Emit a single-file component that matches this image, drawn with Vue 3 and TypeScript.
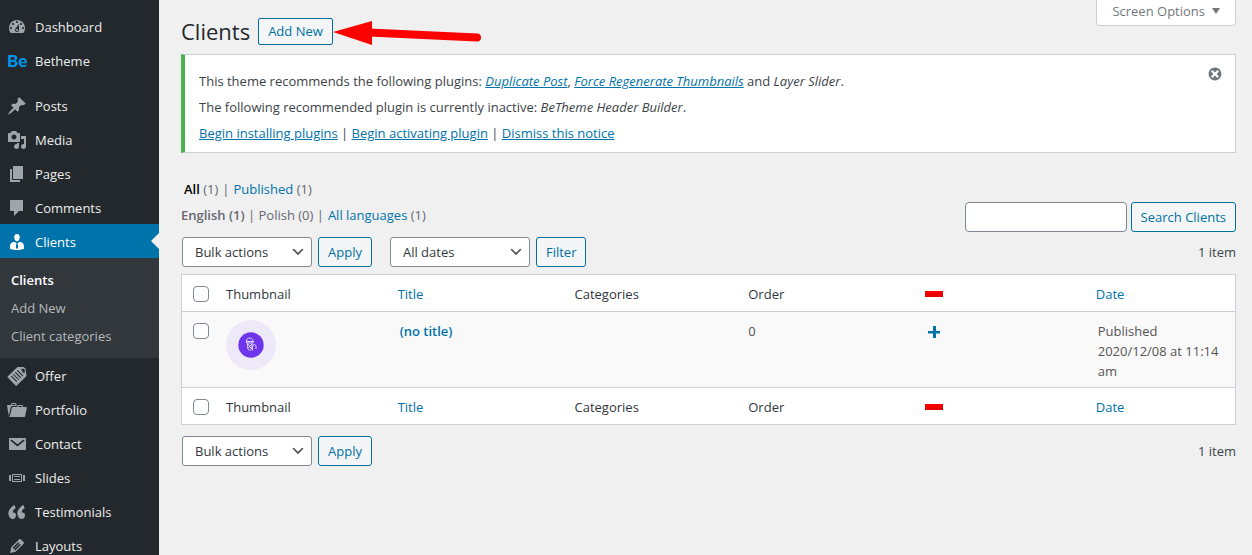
<script setup lang="ts">
interface MenuItem {
  label: string
  icon: string
  current?: boolean
}

const icons: Record<string, string> = {
  dashboard:
    'M3.76 16h12.48c1.1-1.37 1.76-3.11 1.76-5 0-4.42-3.58-8-8-8s-8 3.58-8 8c0 1.89.66 3.63 1.76 5zM10 4c.55 0 1 .45 1 1s-.45 1-1 1-1-.45-1-1 .45-1 1-1zM6 6c.55 0 1 .45 1 1s-.45 1-1 1-1-.45-1-1 .45-1 1-1zm8 0c.55 0 1 .45 1 1s-.45 1-1 1-1-.45-1-1 .45-1 1-1zm-5.37 5.55L12 7v6c0 1.1-.9 2-2 2s-2-.9-2-2c0-.57.24-1.08.63-1.45zM4 10c.55 0 1 .45 1 1s-.45 1-1 1-1-.45-1-1 .45-1 1-1zm12 0c.55 0 1 .45 1 1s-.45 1-1 1-1-.45-1-1 .45-1 1-1zm-5 3c0-.55-.45-1-1-1s-1 .45-1 1 .45 1 1 1 1-.45 1-1z',
  posts:
    'M10.44 3.02l1.82-1.82 6.36 6.35-1.83 1.82c-1.05-.68-2.48-.57-3.41.36l-.75.75c-.92.93-1.04 2.35-.35 3.41l-1.83 1.82-2.41-2.41-2.8 2.79c-.42.42-3.38 2.71-3.8 2.29s1.86-3.39 2.28-3.81l2.79-2.79L4.1 9.36l1.83-1.82c1.05.69 2.48.57 3.4-.36l.75-.75c.93-.92 1.05-2.35.36-3.41z',
  media:
    'M13 11V4c0-.55-.45-1-1-1h-1.67L9 1H5L3.67 3H2c-.55 0-1 .45-1 1v7c0 .55.45 1 1 1h10c.55 0 1-.45 1-1zM7 4.5c1.38 0 2.5 1.12 2.5 2.5S8.38 9.5 7 9.5 4.5 8.38 4.5 7 5.62 4.5 7 4.5zM14 6h5v10.5c0 1.38-1.12 2.5-2.5 2.5S14 17.88 14 16.5s1.12-2.5 2.5-2.5c.17 0 .34.02.5.05V9h-3V6zm-4 8.05V13h2v3.5c0 1.38-1.12 2.5-2.5 2.5S7 17.88 7 16.5 8.12 14 9.5 14c.17 0 .34.02.5.05z',
  pages: 'M6 15V2h10v13H6zm-1 1h8v2H3V5h2v11z',
  comments: 'M4 2h12v11h-4l-5 5v-5H4c-.6 0-1-.4-1-1V3c0-.6.4-1 1-1z',
  clients:
    'M7.3 6l-.03-.19c-.04-.37-.05-.73-.03-1.08.02-.36.1-.71.25-1.04.14-.32.31-.61.52-.86s.49-.46.83-.6c.34-.15.72-.23 1.13-.23.69 0 1.26.2 1.71.59s.76.87.91 1.44.18 1.16.09 1.78l-.03.19c-.01.09-.05.25-.11.48-.05.24-.12.47-.2.69-.08.21-.19.45-.34.72-.14.27-.3.49-.47.69-.18.19-.4.34-.67.48-.27.13-.55.19-.86.19s-.59-.06-.87-.19c-.26-.13-.49-.29-.67-.5-.18-.2-.34-.42-.49-.66-.15-.25-.26-.49-.34-.73-.09-.25-.16-.47-.21-.67-.06-.21-.1-.37-.12-.5zm9.2 6.24c.41.7.5 1.41.5 2.14v2.49c0 .03-.12.08-.29.13-.18.04-.42.13-.97.27-.55.12-1.1.24-1.65.34s-1.19.19-1.95.27c-.75.08-1.46.12-2.13.12-.68 0-1.39-.04-2.14-.12-.75-.07-1.4-.17-1.98-.27-.58-.11-1.08-.23-1.56-.34-.49-.11-.8-.21-1.06-.29L3 16.87v-2.49c0-.75.07-1.46.46-2.15s.81-1.25 1.5-1.68C5.66 10.12 7.19 10 8 10l1.67 1.67L9 13v3l1.02 1.08L11 16v-3l-.68-1.33L11.97 10c.77 0 2.2.07 2.9.52.71.45 1.21 1.02 1.63 1.72z',
  portfolio:
    'M4 5H.78c-.37 0-.74.32-.69.84l1.56 9.99S3.5 8.47 3.86 6.7c.11-.53.61-.7.98-.7H10s-.7-2.08-.77-2.31C9.11 3.25 8.89 3 8.45 3H5.14c-.36 0-.7.23-.8.64C4.25 4.04 4 5 4 5zm4.88 0h-4s.42-1 .87-1h2.13c.48 0 1 1 1 1zM2.67 16.25c-.31.47-.76.75-1.26.75h15.73c.54 0 .92-.31 1.03-.83.44-2.19 1.68-8.44 1.68-8.44.07-.5-.3-.73-.62-.73H16V5.53c0-.16-.26-.53-.66-.53h-3.76c-.52 0-.87.58-.87.58L10 7H5.59c-.32 0-.63.19-.69.5 0 0-1.59 6.7-1.72 7.33-.07.37-.22.99-.51 1.42zM15.38 7H11s.58-1 1.13-1h2.29c.71 0 .96 1 .96 1z',
  contact:
    'M3 4h15c.6 0 1 .4 1 1v10c0 .6-.4 1-1 1H3c-.6 0-1-.4-1-1V5c0-.6.4-1 1-1zm7.49 8.6l6.74-5.53c.24-.2.43-.66.13-1.07-.29-.41-.82-.42-1.17-.17l-5.7 4.3L4.8 5.83c-.35-.25-.88-.24-1.17.17-.3.41-.11.87.13 1.07z',
  slides:
    'M5 6h10v8H5zM6 7v6h8V7zM7 8h6v1H7zM7 11h6v1H7zM3 7h1v6H3zM2 7h1v6H2zM16 7h2v6h-2z',
  testimonials:
    'M8.950 13.220c0-.74-.2-1.38-.61-1.9-.62-.78-1.83-.88-2.53-.72-.29-1.65 1.11-3.75 2.92-4.65L7.34 3c-2.73 1.3-6.42 5.28-5.96 9.05C1.670 14.430 3.050 17 5.500 17c1.150 0 2.060-.35 2.620-1.050s.83-1.680.83-2.730zm9 0c0-.74-.2-1.38-.61-1.9-.62-.78-1.83-.88-2.53-.72-.29-1.65 1.11-3.75 2.92-4.65L16.340 3c-2.73 1.3-6.42 5.28-5.96 9.050C10.670 14.430 12.050 17 14.500 17c1.150 0 2.060-.35 2.620-1.050s.83-1.680.83-2.730z',
  layouts:
    'M13.89 3.39l2.71 2.72c.46.46.42 1.24.03 1.64l-8.01 8.02-5.56 1.16 1.16-5.58s7.6-7.63 7.99-8.03c.39-.39 1.22-.39 1.68.07zm-2.73 2.79l-5.59 5.61 1.11 1.11 5.54-5.65zm-2.97 8.23l5.58-5.6-1.07-1.08-5.59 5.6z',
  offer:
    'M10.500 1L.8 10.300c-.4.400-.4.900 0 1.300l7.700 7.900c.4.400 1 .4 1.400 0L19.500 10l-1-7.500-2-1.500h-3.500zM4 10.500l5.500 5.500.7-.7L4.700 9.800zM6 8.600l5.500 5.500.7-.7L6.700 7.900zM8 6.700l5.500 5.500.7-.7L8.700 6zM10 4.800l5.500 5.500.7-.7L10.700 4.100zM14 3.500l2.500 3.500h1.200V3.500L16 2.500z',
}

const groups: MenuItem[][] = [
  [
    { label: 'Dashboard', icon: 'dashboard' },
    { label: 'Betheme', icon: 'be' },
  ],
  [
    { label: 'Posts', icon: 'posts' },
    { label: 'Media', icon: 'media' },
    { label: 'Pages', icon: 'pages' },
    { label: 'Comments', icon: 'comments' },
    { label: 'Clients', icon: 'clients', current: true },
    { label: 'Offer', icon: 'offer' },
    { label: 'Portfolio', icon: 'portfolio' },
    { label: 'Contact', icon: 'contact' },
    { label: 'Slides', icon: 'slides' },
    { label: 'Testimonials', icon: 'testimonials' },
    { label: 'Layouts', icon: 'layouts' },
  ],
]

const submenu = ['Clients', 'Add New', 'Client categories']
</script>

<template>
  <div class="admin">
    <nav class="sidebar" aria-label="Main menu">
      <ul v-for="(group, g) in groups" :key="g" class="menu">
        <li v-for="item in group" :key="item.label">
          <a href="#" class="menu-link" :class="{ current: item.current }">
            <span v-if="item.icon === 'be'" class="be" aria-hidden="true">Be</span>
            <svg v-else class="menu-icon" viewBox="0 0 20 20" aria-hidden="true">
              <path :d="icons[item.icon]" fill-rule="evenodd" />
            </svg>
            <span>{{ item.label }}</span>
          </a>
          <ul v-if="item.current" class="submenu">
            <li v-for="(sub, i) in submenu" :key="sub">
              <a href="#" :class="{ active: i === 0 }">{{ sub }}</a>
            </li>
          </ul>
        </li>
      </ul>
    </nav>

    <main class="content">
      <button type="button" class="screen-options">Screen Options <span class="triangle"></span></button>

      <header class="heading">
        <h1>Clients</h1>
        <a href="#" class="btn add-new">Add New</a>
        <svg class="arrow" viewBox="0 0 150 26" aria-hidden="true">
          <path d="M36 12.500L144 17.500" stroke="#f00" stroke-width="8" stroke-linecap="round" />
          <path d="M0 12L39 1v24z" fill="#f00" />
        </svg>
      </header>

      <section class="notice">
        <div class="notice-text">
          <p>
            This theme recommends the following plugins: <a href="#"><em>Duplicate Post</em></a>,
            <a href="#"><em>Force Regenerate Thumbnails</em></a> and <em>Layer Slider</em>.
          </p>
          <p>The following recommended plugin is currently inactive: <em>BeTheme Header Builder</em>.</p>
          <p>
            <a href="#">Begin installing plugins</a> | <a href="#">Begin activating plugin</a> |
            <a href="#">Dismiss this notice</a>
          </p>
        </div>
        <button type="button" class="dismiss" aria-label="Dismiss this notice">
          <svg viewBox="0 0 20 20" aria-hidden="true">
            <path
              d="M10 2c4.420 0 8 3.580 8 8s-3.580 8-8 8-8-3.580-8-8 3.580-8 8-8zm5 11l-3-3 3-3-2-2-3 3-3-3-2 2 3 3-3 3 2 2 3-3 3 3z"
            />
          </svg>
        </button>
      </section>

      <div class="filters">
        <div class="views">
          <p class="statuses">
            <a href="#" class="all">All</a> <span>(1)</span><span class="bar">|</span
            ><a href="#">Published</a> <span>(1)</span>
          </p>
          <p>
            <b>English (1)</b> | Polish (0) |<a href="#" class="languages">All languages</a> (1)
          </p>
        </div>
        <form class="search" @submit.prevent>
          <input type="search" aria-label="Search Clients" />
          <button type="submit" class="btn">Search Clients</button>
        </form>
      </div>

      <div class="tablenav">
        <select class="bulk" aria-label="Bulk actions">
          <option>Bulk actions</option>
        </select>
        <button type="button" class="btn">Apply</button>
        <select class="dates" aria-label="Filter by date">
          <option>All dates</option>
        </select>
        <button type="button" class="btn">Filter</button>
        <span class="count">1 item</span>
      </div>

      <table class="clients">
        <colgroup>
          <col class="c-check" />
          <col class="c-thumb" />
          <col class="c-title" />
          <col class="c-cats" />
          <col class="c-order" />
          <col class="c-lang" />
          <col class="c-date" />
        </colgroup>
        <thead>
          <tr>
            <td><input type="checkbox" aria-label="Select all" /></td>
            <th scope="col">Thumbnail</th>
            <th scope="col"><a href="#">Title</a></th>
            <th scope="col">Categories</th>
            <th scope="col">Order</th>
            <th scope="col"><span class="flag" role="img" aria-label="Polish"></span></th>
            <th scope="col"><a href="#">Date</a></th>
          </tr>
        </thead>
        <tbody>
          <tr>
            <td><input type="checkbox" aria-label="Select (no title)" /></td>
            <td class="thumb">
              <svg viewBox="0 0 50 50" role="img" aria-label="Client logo">
                <circle cx="25" cy="25" r="25" fill="#eee9f8" />
                <circle cx="25" cy="25" r="12.700" fill="#6e35ec" />
                <g fill="none" stroke="#e4d9ff" stroke-width="1">
                  <path d="M20.500 21c0-2 1.300-3 3-3s3.500 1 3.500 3v2h-6.500zM20 21.500h7.500" />
                  <path d="M21.500 23.500v3c0 5 4.500 5 4.500 0v-3M22 24l3.500 5M26 24l-4 4M26.500 30.500v-3c0-4 3.500-4 3.500-1v2.500" />
                </g>
              </svg>
            </td>
            <td class="title"><a href="#">(no title)</a></td>
            <td></td>
            <td>0</td>
            <td>
              <a href="#" class="add" aria-label="Add translation">
                <svg viewBox="0 0 18 18" aria-hidden="true">
                  <path d="M3 8h5V3h3v5h4v2.500h-4V15H8v-4.500H3z" />
                </svg>
              </a>
            </td>
            <td class="date">Published<br />2020/12/08 at 11:14 am</td>
          </tr>
        </tbody>
        <tfoot>
          <tr>
            <td><input type="checkbox" aria-label="Select all" /></td>
            <th scope="col">Thumbnail</th>
            <th scope="col"><a href="#">Title</a></th>
            <th scope="col">Categories</th>
            <th scope="col">Order</th>
            <th scope="col"><span class="flag" role="img" aria-label="Polish"></span></th>
            <th scope="col"><a href="#">Date</a></th>
          </tr>
        </tfoot>
      </table>

      <div class="tablenav bottom">
        <select class="bulk" aria-label="Bulk actions">
          <option>Bulk actions</option>
        </select>
        <button type="button" class="btn">Apply</button>
        <span class="count">1 item</span>
      </div>
    </main>
  </div>
</template>

<style>
body {
  background: #f0f0f1;
}
</style>

<style scoped>
.admin,
.admin * {
  box-sizing: border-box;
}

.admin {
  display: flex;
  height: 100vh;
  overflow: hidden;
  color: #3c434a;
  font: 13px/20px 'Open Sans', 'Noto Sans', sans-serif;
}

a {
  color: #0073aa;
  text-decoration: none;
}

ul,
p,
h1 {
  margin: 0;
  padding: 0;
  list-style: none;
}

button,
input,
select {
  font: inherit;
}

/* Sidebar */
.sidebar {
  flex: 0 0 159px;
  padding-top: 9px;
  background: #23282d;
  overflow: hidden;
}

.menu + .menu {
  margin-top: 11px;
}

.menu-link {
  position: relative;
  display: flex;
  align-items: center;
  gap: 8px;
  height: 34px;
  padding: 1px 0 0 7px;
  color: #eee;
}

.menu-icon {
  width: 20px;
  height: 20px;
  fill: #a0a5aa;
}

.be {
  width: 20px;
  color: #0095eb;
  font: 900 17px/20px Lato, sans-serif;
}

.menu-link.current {
  background: #0073aa;
  color: #fff;
}

.menu-link.current .menu-icon {
  fill: #fff;
}

.menu-link.current::after {
  content: '';
  position: absolute;
  right: 0;
  top: 9px;
  border: 8px solid transparent;
  border-left: 0;
  border-right-color: #f0f0f1;
}

.submenu {
  padding: 8px 11px;
  background: #32373c;
}

.submenu a {
  display: block;
  line-height: 28px;
  color: #b4b9be;
}

.submenu a.active {
  color: #fff;
  font-weight: 600;
}

/* Content */
.content {
  position: relative;
  flex: 1;
  min-width: 0;
  padding: 17px 16px 0 22px;
}

.screen-options {
  position: absolute;
  top: 0;
  right: 16px;
  display: flex;
  align-items: center;
  gap: 7px;
  height: 26px;
  padding: 0 15px 3px;
  border: 1px solid #ccd0d4;
  border-top: 0;
  border-radius: 0 0 4px 4px;
  background: #fff;
  color: #72777c;
}

.triangle {
  border: 4px solid transparent;
  border-top: 6px solid #72777c;
  border-bottom: 0;
}

.heading {
  display: flex;
  align-items: center;
  height: 28px;
}

h1 {
  color: #23282d;
  font-size: 22px;
  line-height: 28px;
  font-weight: 400;
}

.btn {
  height: 30px;
  padding: 0 9px;
  border: 1px solid #0071a1;
  border-radius: 3px;
  background: #f3f5f6;
  color: #0071a1;
  line-height: 28px;
  white-space: nowrap;
}

.add-new {
  height: 27px;
  margin-left: 8px;
  border-radius: 2px;
  font-weight: 500;
  line-height: 25px;
}

.arrow {
  width: 150px;
  height: 26px;
  margin-top: 3px;
}

.notice {
  display: flex;
  justify-content: space-between;
  align-items: flex-start;
  margin-top: 9px;
  padding: 14px 12px 3px 14px;
  border: 1px solid #ccd0d4;
  border-left: 4px solid #46b450;
  background: #fff;
  font-weight: 500;
}

.notice-text a {
  text-decoration: underline;
}

.notice-text p {
  line-height: 20px;
  margin-bottom: 6px;
}

.notice-text p:first-child {
  padding-top: 2px;
}

.dismiss {
  width: 16px;
  height: 16px;
  margin-top: -3px;
  padding: 0;
  border: 0;
  background: none;
}

.dismiss svg {
  display: block;
  width: 16px;
  height: 16px;
  fill: #72777c;
}

.filters {
  display: flex;
  justify-content: space-between;
  margin-top: 26px;
  color: #646970;
}

.views p + p {
  margin-top: 6px;
}

.statuses {
  padding-left: 3px;
}

.all {
  color: #000;
  font-weight: 600;
}

.bar {
  margin: 0 4px;
}

.languages {
  margin-left: 4px;
}

.views b {
  font-weight: 600;
}

.search {
  display: flex;
  gap: 4px;
  margin-top: 23px;
}

.search input {
  width: 162px;
  height: 30px;
  border: 1px solid #7e8993;
  border-radius: 4px;
  background: #fff;
}

.tablenav {
  display: flex;
  align-items: center;
  gap: 6px;
  margin-top: 5px;
  padding-left: 1px;
}

.bottom {
  margin-top: 11px;
}

select {
  height: 30px;
  padding: 0 24px 0 12px;
  border: 1px solid #7e8993;
  border-radius: 3px;
  appearance: none;
  color: #32373c;
  background: #fff
    url("data:image/svg+xml,%3Csvg xmlns='http://www.w3.org/2000/svg' viewBox='0 0 20 20'%3E%3Cpath d='M5 6l5 5 5-5 2 1-7 7-7-7 2-1z' fill='%23555'/%3E%3C/svg%3E")
    no-repeat right 5px center / 16px 16px;
}

.bulk {
  width: 130px;
}

.dates {
  width: 140px;
  margin-left: 12px;
}

.count {
  margin-left: auto;
}

/* Table */
.clients {
  width: 100%;
  margin-top: 7px;
  table-layout: fixed;
  border: 1px solid #ccd0d4;
  border-spacing: 0;
  background: #fff;
}

.c-check {
  width: 34px;
}

.c-thumb {
  width: 16.3%;
}

.c-title {
  width: 16.8%;
}

.c-cats {
  width: 16.5%;
}

.c-order {
  width: 16.8%;
}

.c-lang {
  width: 16.2%;
}

.clients th,
.clients td {
  padding: 9px 10px 7px;
  text-align: left;
  vertical-align: top;
  font-weight: 400;
}

.clients th {
  color: #32373c;
}

.clients td:first-child {
  padding: 11px 0 0 11px;
}

.clients thead th,
.clients thead td {
  border-bottom: 1px solid #ccd0d4;
}

.clients tfoot th,
.clients tfoot td {
  border-top: 1px solid #ccd0d4;
}

.clients tbody td {
  padding-bottom: 6px;
  background: #f9f9f9;
  color: #555;
}

.clients input {
  display: block;
  width: 16px;
  height: 16px;
  margin: 0;
  appearance: none;
  border: 1px solid #7e8993;
  border-radius: 4px;
  background: #fff;
}

.clients .thumb {
  padding-top: 8px;
}

.thumb svg {
  display: block;
  width: 50px;
  height: 50px;
}

.clients .title {
  padding-left: 12px;
}

.title a {
  font-weight: 600;
}

.clients .date {
  padding-left: 12px;
}

.flag {
  display: block;
  width: 18px;
  height: 12px;
  margin-top: 1px;
  background: linear-gradient(#fff 50%, #f00 50%, #e00000);
}

.add svg {
  display: block;
  width: 18px;
  height: 18px;
  margin-top: 2px;
  fill: #0073aa;
}
</style>
